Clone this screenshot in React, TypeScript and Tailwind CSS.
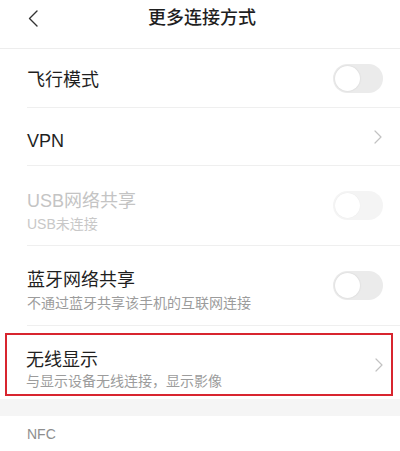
import React from "react";

function Toggle({ disabled = false }: { disabled?: boolean }) {
  return (
    <div
      className={`w-[50px] h-[29px] rounded-full p-[2px] flex items-center ${
        disabled ? "bg-[#f4f4f4]" : "bg-[#ebebeb]"
      }`}
    >
      <div
        className={`w-[25px] h-[25px] rounded-full bg-white ${
          disabled ? "shadow-[0_0_1px_rgba(0,0,0,0.08)]" : "shadow-[0_0_2px_rgba(0,0,0,0.12)]"
        }`}
      />
    </div>
  );
}

function Chevron() {
  return (
    <svg width="8" height="14" viewBox="0 0 8 14" fill="none">
      <path d="M1 1l6 6-6 6" stroke="#c2c2c2" strokeWidth="1.2" strokeLinecap="round" strokeLinejoin="round" />
    </svg>
  );
}

export default function App() {
  return (
    <div className="w-[400px] h-[451px] bg-white overflow-hidden font-['Liberation_Sans','Noto_Sans_CJK_SC',sans-serif]">
      {/* 顶部栏 */}
      <div className="pb-[12px] border-b border-[#ededed]">
        <div className="h-[36px] relative flex items-center justify-center">
          <div className="absolute left-[28px] top-[10px]">
            <svg width="10" height="17" viewBox="0 0 10 17" fill="none">
              <path d="M9 1L1.5 8.5 9 16" stroke="#333" strokeWidth="1.4" strokeLinecap="round" strokeLinejoin="round" />
            </svg>
          </div>
          <span className="text-[18px] leading-[22px] font-medium text-[#1f1f1f] ml-[4px]">更多连接方式</span>
        </div>
      </div>

      {/* 飞行模式 */}
      <div className="ml-[27px] h-[59px] border-b border-[#efefef] flex items-center justify-between pr-[17px]">
        <span className="text-[18px] leading-[22px] text-[#1f1f1f] pt-[3px]">飞行模式</span>
        <Toggle />
      </div>

      {/* VPN */}
      <div className="ml-[27px] h-[58px] border-b border-[#efefef] flex items-center justify-between pr-[18px]">
        <span className="text-[18px] leading-[22px] text-[#1f1f1f] pt-[8px]">VPN</span>
        <Chevron />
      </div>

      {/* USB网络共享 */}
      <div className="ml-[27px] h-[80px] border-b border-[#efefef] flex items-center justify-between pr-[17px]">
        <div className="pt-[12px]">
          <div className="text-[18px] leading-[22px] text-[#c4c4c4]">USB网络共享</div>
          <div className="text-[14px] leading-[20px] text-[#c8c8c8] mt-[2px]">USB未连接</div>
        </div>
        <Toggle disabled />
      </div>

      {/* 蓝牙网络共享 */}
      <div className="ml-[27px] h-[80px] border-b border-[#efefef] flex items-center justify-between pr-[17px]">
        <div className="pt-[10px]">
          <div className="text-[18px] leading-[22px] text-[#1f1f1f]">蓝牙网络共享</div>
          <div className="text-[14px] leading-[20px] text-[#9c9c9c] mt-[2px]">不通过蓝牙共享该手机的互联网连接</div>
        </div>
        <Toggle />
      </div>

      {/* 无线显示（红框标注） */}
      <div className="mt-[7px] mx-[5px] w-[388px] h-[63px] border-[2.5px] border-[#d8252f] flex items-center justify-between pl-[19px] pr-[8px]">
        <div className="pt-[10px]">
          <div className="text-[18px] leading-[22px] text-[#1f1f1f]">无线显示</div>
          <div className="text-[14px] leading-[20px] text-[#9c9c9c]">与显示设备无线连接，显示影像</div>
        </div>
        <Chevron />
      </div>

      <div className="mt-[3px] h-[17px] bg-[#f5f5f5]" />

      {/* NFC */}
      <div className="pl-[27px] h-[36px] flex items-center">
        <span className="text-[14px] leading-[20px] text-[#8e8e8e]">NFC</span>
      </div>
    </div>
  );
}
